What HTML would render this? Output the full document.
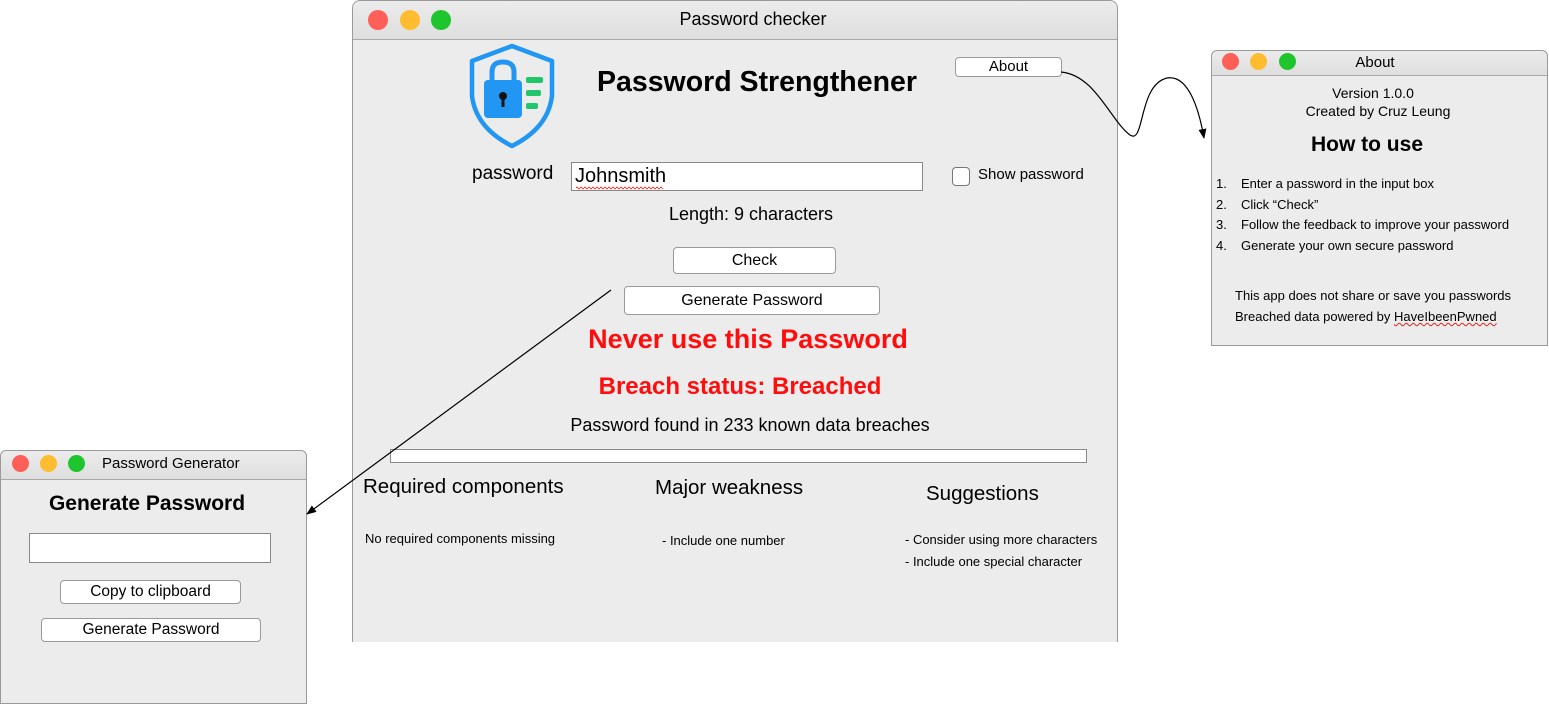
<!DOCTYPE html>
<html><head><meta charset="utf-8"><style>
*{margin:0;padding:0;box-sizing:border-box}
body{width:1549px;height:703px;background:#fff;position:relative;overflow:hidden;font-family:"Liberation Sans","DejaVu Sans",sans-serif;color:#000}
.a{position:absolute;white-space:nowrap}
.win{position:absolute;background:#ececec;border:1px solid #9a9a9a}
.tb{position:absolute;left:0;right:0;top:0;background:linear-gradient(#ececec,#dedede);border-bottom:1px solid #a8a8a8;border-radius:8px 8px 0 0}
.dot{position:absolute;border-radius:50%}
.btn{position:absolute;background:#fff;border:1px solid #9a9a9a;border-radius:4px;text-align:center}
.c{text-align:center;transform:translateX(-50%)}
</style></head><body>

<!-- Main window -->
<div class="win" style="left:352px;top:0;width:766px;height:642px;border-radius:8px 8px 0 0;border-bottom:none">
  <div class="tb" style="height:39px"></div>
</div>
<div class="dot" style="left:368px;top:10px;width:20px;height:20px;background:#fe5f57"></div>
<div class="dot" style="left:400px;top:10px;width:20px;height:20px;background:#febc2e"></div>
<div class="dot" style="left:431px;top:10px;width:20px;height:20px;background:#1fc52d"></div>
<div class="a c" style="left:753px;top:9px;font-size:18px">Password checker</div>

<svg class="a" style="left:0;top:0" width="600" height="160">
  <path d="M512 46 L552 61 L552 96 Q548 128 512 146 Q476 128 472 96 L472 61 Z" fill="none" stroke="#2196f3" stroke-width="4.5" stroke-linejoin="round"/>
  <path d="M492 82 V72 Q492 62 503 62 Q514 62 514 72 V82" fill="none" stroke="#2196f3" stroke-width="5"/>
  <rect x="484" y="80" width="38" height="38" rx="4" fill="#2196f3"/>
  <circle cx="503" cy="96" r="4" fill="#111"/><rect x="501.5" y="97" width="3" height="10" fill="#111"/>
  <rect x="526" y="77" width="17" height="6" rx="2" fill="#21c56b"/>
  <rect x="526" y="90" width="15" height="6" rx="2" fill="#21c56b"/>
  <rect x="526" y="103" width="12" height="6" rx="2" fill="#21c56b"/>
</svg>

<div class="a" style="left:597px;top:66px;font-size:28.5px;font-weight:bold">Password Strengthener</div>
<div class="btn" style="left:955px;top:57px;width:107px;height:20px;font-size:15px;line-height:18px">About</div>

<div class="a" style="left:472px;top:163px;font-size:19px">password</div>
<div class="a" style="left:571px;top:162px;width:352px;height:29px;background:#fff;border:1px solid #888"></div>
<div class="a" style="left:575px;top:165px;font-size:20px">Johnsmith</div>
<svg class="a" style="left:576px;top:186px" width="96" height="4"><path d="M0 2 l1 -1 1 1 1 1 1 -1 1 -1 1 1 1 1 1 -1 1 -1 1 1 1 1 1 -1 1 -1 1 1 1 1 1 -1 1 -1 1 1 1 1 1 -1 1 -1 1 1 1 1 1 -1 1 -1 1 1 1 1 1 -1 1 -1 1 1 1 1 1 -1 1 -1 1 1 1 1 1 -1 1 -1 1 1 1 1 1 -1 1 -1 1 1 1 1 1 -1 1 -1 1 1 1 1 1 -1 1 -1 1 1 1 1 1 -1 1 -1 1 1 1 1 1 -1 1 -1 1 1 1 1 1 -1 1 -1 1 1 1 1 1 -1 1 -1 1 1 1 1 1 -1 1 -1 1 1 1 1 1 -1 1 -1 1 1 1 1 1 -1 1 -1 1 1 1 1 1 -1 1 -1 1 1 1 1 1 -1 1 -1 1 1 1 1" fill="none" stroke="#e02020" stroke-width="0.8"/></svg>
<div class="a" style="left:952px;top:167px;width:18px;height:19px;background:#fff;border:1px solid #777;border-radius:4px"></div>
<div class="a" style="left:978px;top:166px;font-size:15px">Show password</div>

<div class="a c" style="left:751px;top:204px;font-size:18px">Length: 9 characters</div>
<div class="btn" style="left:673px;top:247px;width:163px;height:27px;font-size:16px;line-height:25px">Check</div>
<div class="btn" style="left:624px;top:286px;width:256px;height:29px;font-size:16px;line-height:27px">Generate Password</div>

<div class="a c" style="left:748px;top:324px;font-size:27px;font-weight:bold;color:#ff0d0d">Never use this Password</div>
<div class="a c" style="left:740px;top:373px;font-size:24px;font-weight:bold;color:#ff0d0d">Breach status: Breached</div>
<div class="a c" style="left:750px;top:415px;font-size:18px">Password found in 233 known data breaches</div>
<div class="a" style="left:390px;top:449px;width:697px;height:14px;background:#fff;border:1px solid #888"></div>

<div class="a" style="left:363px;top:475px;font-size:20.5px">Required components</div>
<div class="a" style="left:655px;top:476px;font-size:20.5px">Major weakness</div>
<div class="a" style="left:926px;top:482px;font-size:20.5px">Suggestions</div>
<div class="a" style="left:365px;top:531px;font-size:13px">No required components missing</div>
<div class="a" style="left:662px;top:533px;font-size:13px">- Include one number</div>
<div class="a" style="left:905px;top:532px;font-size:13px">- Consider using more characters</div>
<div class="a" style="left:905px;top:554px;font-size:13px">- Include one special character</div>

<!-- About window -->
<div class="win" style="left:1211px;top:50px;width:337px;height:296px;border-radius:6px 6px 0 0">
  <div class="tb" style="height:25px"></div>
</div>
<div class="dot" style="left:1222px;top:53px;width:17px;height:17px;background:#fe5f57"></div>
<div class="dot" style="left:1250px;top:53px;width:17px;height:17px;background:#febc2e"></div>
<div class="dot" style="left:1279px;top:53px;width:17px;height:17px;background:#1fc52d"></div>
<div class="a c" style="left:1375px;top:54px;font-size:15px">About</div>
<div class="a c" style="left:1373px;top:85px;font-size:14px">Version 1.0.0</div>
<div class="a c" style="left:1378px;top:103px;font-size:14px">Created by Cruz Leung</div>
<div class="a c" style="left:1367px;top:133px;font-size:21px;font-weight:bold">How to use</div>
<div class="a" style="left:1216px;top:174px;font-size:13px;line-height:20.7px">1.<br>2.<br>3.<br>4.</div>
<div class="a" style="left:1241px;top:174px;font-size:13px;line-height:20.7px">Enter a password in the input box<br>Click “Check”<br>Follow the feedback to improve your password<br>Generate your own secure password</div>
<div class="a" style="left:1235px;top:285px;font-size:13px;line-height:21px">This app does not share or save you passwords<br>Breached data powered by <span style="text-decoration:underline wavy #e02020;text-decoration-thickness:1px">HaveIbeenPwned</span></div>

<!-- Generator window -->
<div class="win" style="left:0;top:450px;width:307px;height:254px;border-radius:6px 6px 0 0">
  <div class="tb" style="height:29px"></div>
</div>
<div class="dot" style="left:12px;top:455px;width:17px;height:17px;background:#fe5f57"></div>
<div class="dot" style="left:40px;top:455px;width:17px;height:17px;background:#febc2e"></div>
<div class="dot" style="left:68px;top:455px;width:17px;height:17px;background:#1fc52d"></div>
<div class="a" style="left:102px;top:455px;font-size:15px">Password Generator</div>
<div class="a c" style="left:147px;top:492px;font-size:21px;font-weight:bold">Generate Password</div>
<div class="a" style="left:29px;top:533px;width:242px;height:30px;background:#fff;border:1px solid #888"></div>
<div class="btn" style="left:60px;top:580px;width:181px;height:24px;font-size:15.5px;line-height:22px">Copy to clipboard</div>
<div class="btn" style="left:41px;top:618px;width:220px;height:24px;font-size:15.5px;line-height:22px">Generate Password</div>

<!-- arrows -->
<svg class="a" style="left:0;top:0" width="1549" height="703">
  <defs><marker id="ar" markerWidth="10" markerHeight="8" refX="9" refY="4" orient="auto" markerUnits="userSpaceOnUse"><path d="M0 0 L10 4 L0 8 Z" fill="#000"/></marker></defs>
  <path d="M1061 72 C1095 75 1110 120 1130 135 C1145 145 1138 85 1167 78 C1190 74 1200 115 1204 138" fill="none" stroke="#000" stroke-width="1.2" marker-end="url(#ar)"/>
  <path d="M611 290 L307 514" fill="none" stroke="#000" stroke-width="1.2" marker-end="url(#ar)"/>
</svg>
</body></html>
